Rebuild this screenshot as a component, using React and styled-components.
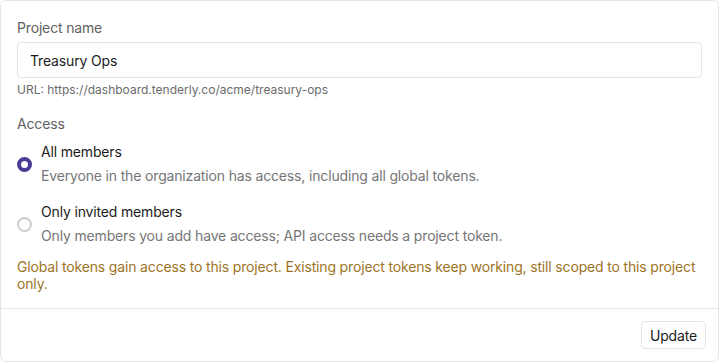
import React, { useState } from 'react';
import styled, { createGlobalStyle } from 'styled-components';

const GlobalStyle = createGlobalStyle`
  html, body {
    margin: 0;
    padding: 0;
    background: #ffffff;
  }
  body {
    font-family: Inter, "Noto Sans", "Liberation Sans", sans-serif;
    letter-spacing: -0.01em;
    -webkit-font-smoothing: antialiased;
  }
`;

const Card = styled.div`
  box-sizing: border-box;
  width: 719px;
  height: 362px;
  border: 1px solid #e6e6e6;
  border-radius: 6px;
  background: #fff;
  display: flex;
  flex-direction: column;
`;

const Body = styled.div`
  padding: 17px 16px 16px;
  display: flex;
  flex-direction: column;
`;

const Label = styled.div`
  font-size: 14px;
  line-height: 20px;
  color: #5f5f5f;
  margin-top: ${(p) => p.$mt || 0}px;
`;

const Input = styled.input`
  box-sizing: border-box;
  margin-top: 4px;
  height: 36px;
  width: 100%;
  border: 1px solid #e4e4e4;
  border-radius: 4px;
  padding: 0 12px;
  font-family: inherit;
  letter-spacing: inherit;
  font-size: 14px;
  color: #1c1c1c;
  outline: none;
`;

const Hint = styled.div`
  margin-top: 4px;
  font-size: 12px;
  line-height: 16px;
  letter-spacing: 0;
  color: #6b6b6b;
`;

const Options = styled.div`
  margin-top: 8px;
  display: flex;
  flex-direction: column;
  gap: 16px;
`;

const Option = styled.label`
  display: flex;
  align-items: center;
  gap: 9px;
  cursor: pointer;
`;

const Radio = styled.span`
  box-sizing: border-box;
  flex: none;
  width: 15px;
  height: 15px;
  border-radius: 50%;
  background: #fff;
  border: ${(p) => (p.$checked ? '4px solid #4b3993' : '2px solid #cdcdcd')};
`;

const OptionText = styled.div`
  display: flex;
  flex-direction: column;
  gap: 4px;
`;

const OptionTitle = styled.div`
  font-size: 14px;
  line-height: 20px;
  color: #1c1c1c;
`;

const OptionDesc = styled.div`
  font-size: 14px;
  line-height: 20px;
  color: #767676;
`;

const Warning = styled.div`
  margin-top: 12px;
  font-size: 14px;
  line-height: 17px;
  color: #9d7426;
`;

const Footer = styled.div`
  border-top: 1px solid #e6e6e6;
  margin-top: auto;
  padding: 12px;
  display: flex;
  justify-content: flex-end;
`;

const Button = styled.button`
  box-sizing: border-box;
  height: 28px;
  padding: 0 8px;
  border: 1px solid #e4e4e4;
  border-radius: 4px;
  background: #fff;
  font-family: inherit;
  letter-spacing: inherit;
  font-size: 14px;
  color: #1c1c1c;
  cursor: pointer;
`;

const options = [
  {
    id: 'all',
    title: 'All members',
    desc: 'Everyone in the organization has access, including all global tokens.',
  },
  {
    id: 'invited',
    title: 'Only invited members',
    desc: 'Only members you add have access; API access needs a project token.',
  },
];

const App = () => {
  const [access, setAccess] = useState('all');

  return (
    <>
      <GlobalStyle />
      <Card>
        <Body>
          <Label>Project name</Label>
          <Input defaultValue="Treasury Ops" />
          <Hint>URL: https://dashboard.tenderly.co/acme/treasury-ops</Hint>
          <Label $mt={16}>Access</Label>
          <Options>
            {options.map((o) => (
              <Option key={o.id} onClick={() => setAccess(o.id)}>
                <Radio $checked={access === o.id} />
                <OptionText>
                  <OptionTitle>{o.title}</OptionTitle>
                  <OptionDesc>{o.desc}</OptionDesc>
                </OptionText>
              </Option>
            ))}
          </Options>
          <Warning>
            Global tokens gain access to this project. Existing project tokens keep working, still
            scoped to this project only.
          </Warning>
        </Body>
        <Footer>
          <Button>Update</Button>
        </Footer>
      </Card>
    </>
  );
};

export default App;
